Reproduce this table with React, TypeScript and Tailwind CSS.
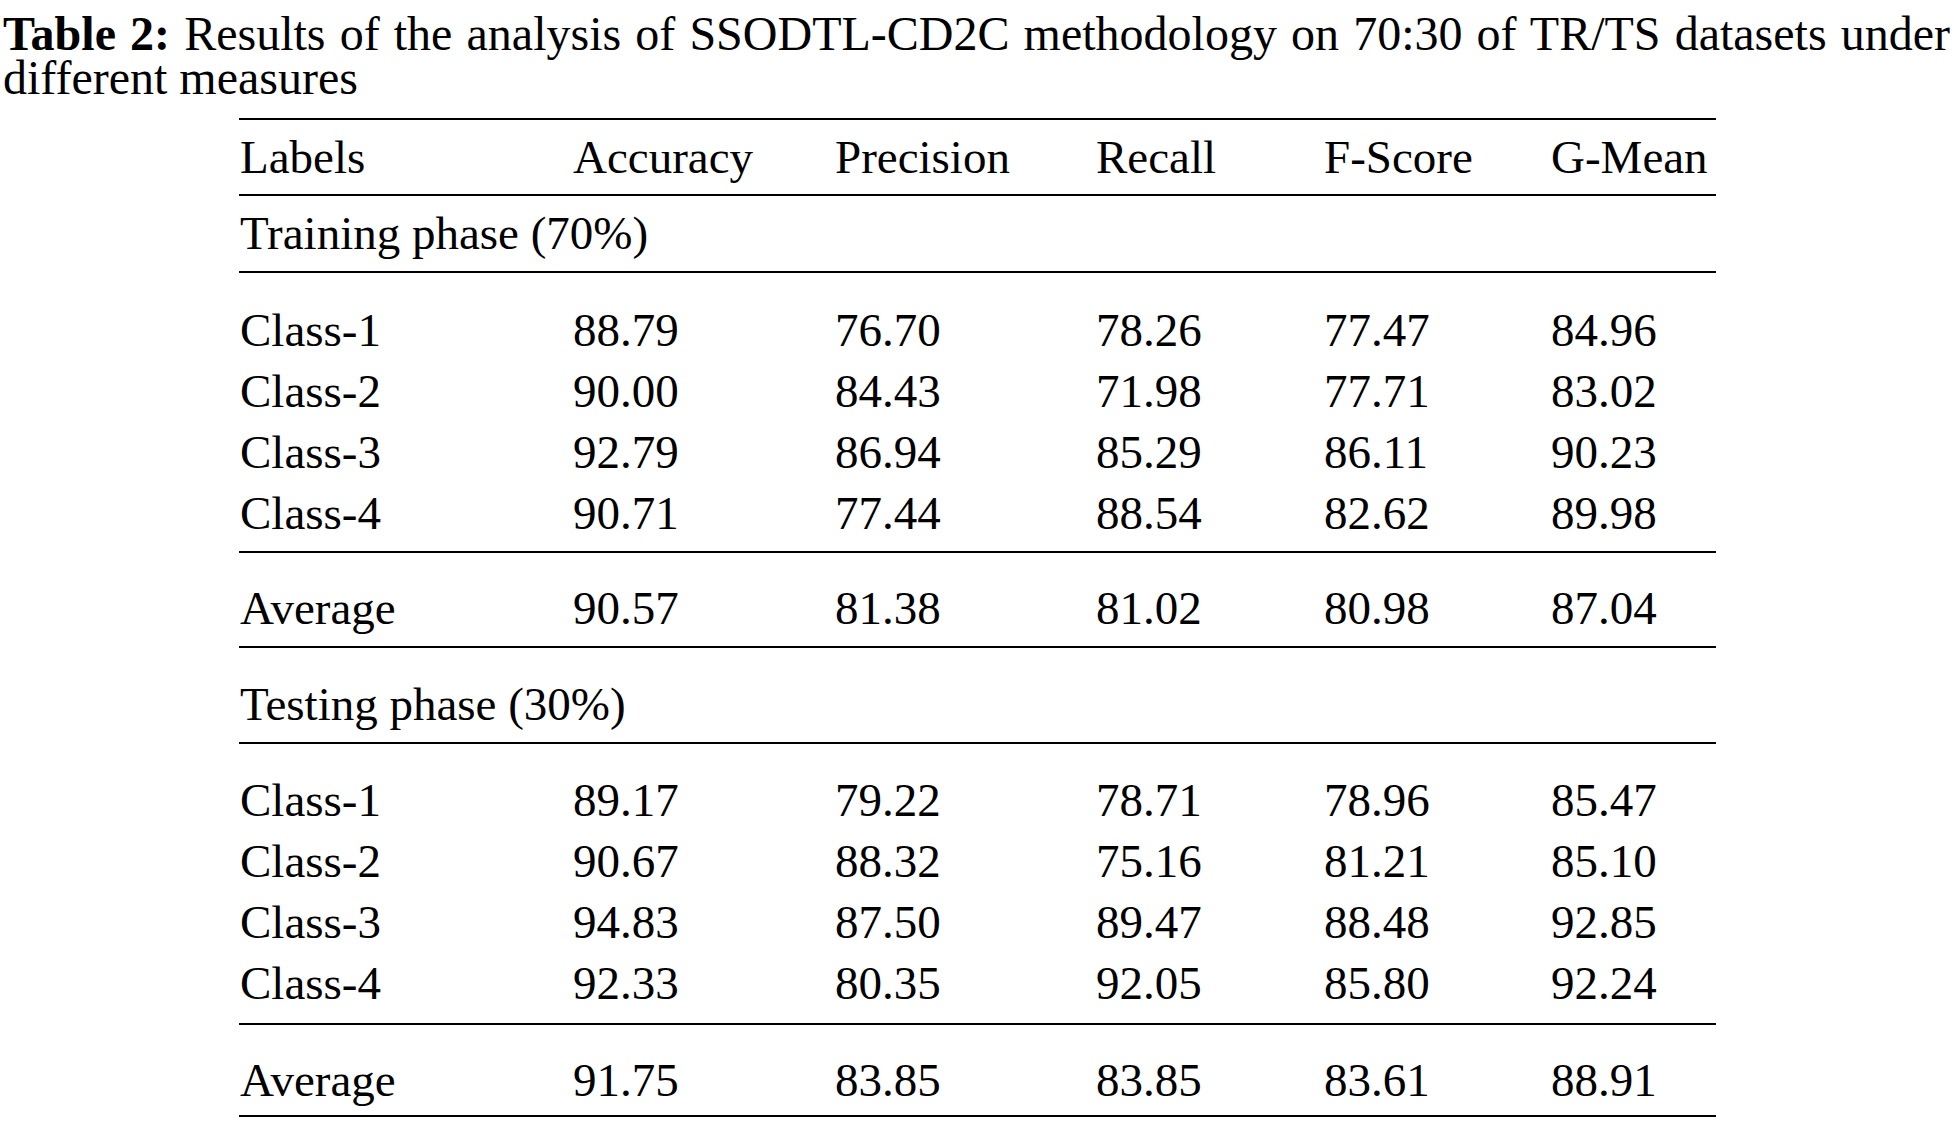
import React from "react";

const cols = "grid grid-cols-[333px_262px_261px_228px_227px_166px]";

function Rule() {
  return <div className="h-[2px] bg-black" />;
}

function Row({ cells, pad }: { cells: string[]; pad: string }) {
  return (
    <div className={`${cols} ${pad}`}>
      {cells.map((c, i) => (
        <div key={i} className="whitespace-nowrap pl-[1px]">
          {c}
        </div>
      ))}
    </div>
  );
}

function Block({ rows, pad }: { rows: string[][]; pad: string }) {
  return (
    <div className={pad}>
      {rows.map((r, i) => (
        <div key={i} className={cols}>
          {r.map((c, j) => (
            <div key={j} className="whitespace-nowrap pl-[1px]">
              {c}
            </div>
          ))}
        </div>
      ))}
    </div>
  );
}

const train = [
  ["Class-1", "88.79", "76.70", "78.26", "77.47", "84.96"],
  ["Class-2", "90.00", "84.43", "71.98", "77.71", "83.02"],
  ["Class-3", "92.79", "86.94", "85.29", "86.11", "90.23"],
  ["Class-4", "90.71", "77.44", "88.54", "82.62", "89.98"],
];

const test = [
  ["Class-1", "89.17", "79.22", "78.71", "78.96", "85.47"],
  ["Class-2", "90.67", "88.32", "75.16", "81.21", "85.10"],
  ["Class-3", "94.83", "87.50", "89.47", "88.48", "92.85"],
  ["Class-4", "92.33", "80.35", "92.05", "85.80", "92.24"],
];

export default function App() {
  return (
    <div className="w-[1954px] h-[1121px] overflow-hidden bg-white text-black font-['Liberation_Serif','Times_New_Roman',serif]">
      <p className="w-[1950px] pl-[3px] pt-[12px] text-[48px] leading-[44px] text-justify">
        <b>Table 2:</b> Results of the analysis of SSODTL-CD2C methodology on 70:30 of TR/TS datasets under different measures
      </p>
      <div className="ml-[239px] mt-[18px] w-[1477px] text-[47px] leading-[61px]">
        <Rule />
        <Row cells={["Labels", "Accuracy", "Precision", "Recall", "F-Score", "G-Mean"]} pad="pt-[7px] pb-[6px]" />
        <Rule />
        <Row cells={["Training phase (70%)", "", "", "", "", ""]} pad="pt-[7px] pb-[7px]" />
        <Rule />
        <Block rows={train} pad="pt-[27px] pb-[7px]" />
        <Rule />
        <Row cells={["Average", "90.57", "81.38", "81.02", "80.98", "87.04"]} pad="pt-[25px] pb-[7px]" />
        <Rule />
        <Row cells={["Testing phase (30%)", "", "", "", "", ""]} pad="pt-[26px] pb-[7px]" />
        <Rule />
        <Block rows={test} pad="pt-[26px] pb-[9px]" />
        <Rule />
        <Row cells={["Average", "91.75", "83.85", "83.85", "83.61", "88.91"]} pad="pt-[25px] pb-[4px]" />
        <Rule />
      </div>
    </div>
  );
}
